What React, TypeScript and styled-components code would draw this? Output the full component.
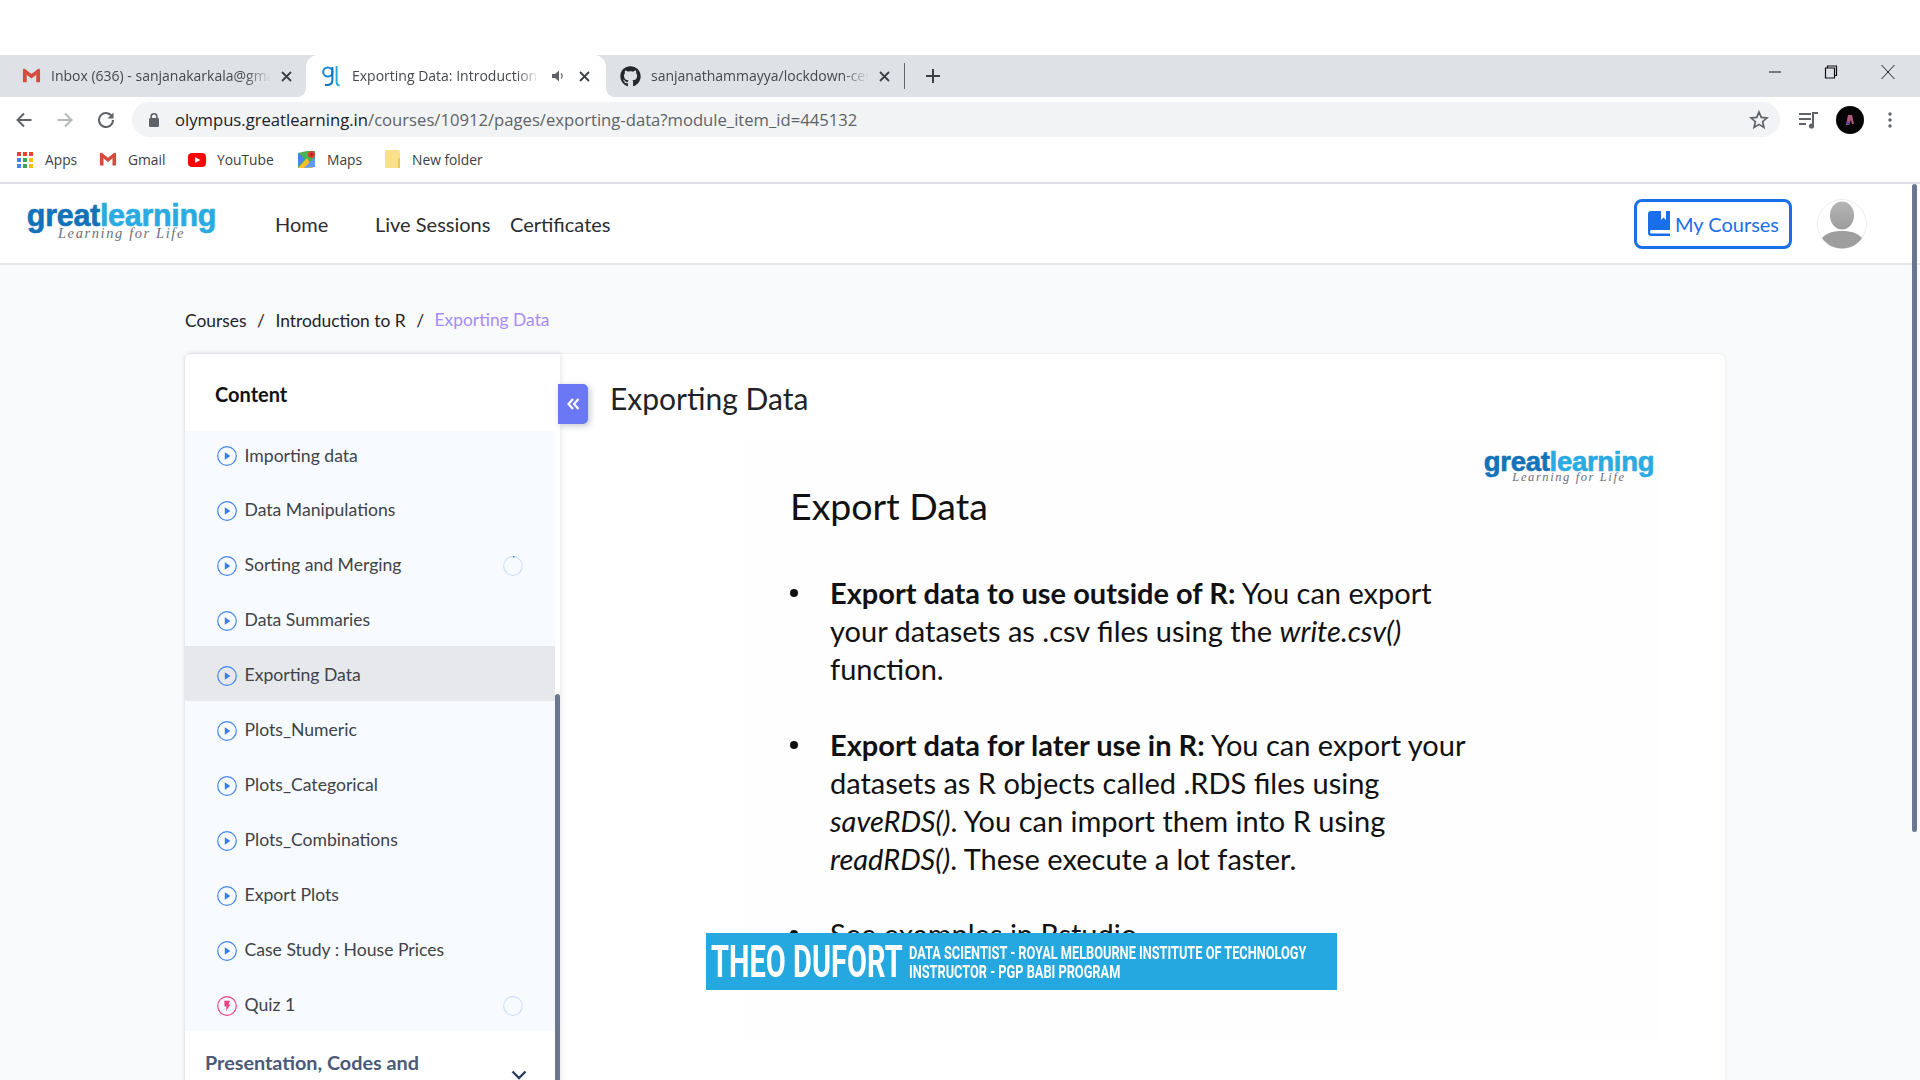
import React from "react";
import styled, { createGlobalStyle } from "styled-components";
import { FaGithub } from "react-icons/fa";

const GlobalStyle = createGlobalStyle`
  html, body {
    margin: 0;
    padding: 0;
    background: #fff;
    overflow: hidden;
  }
  * {
    box-sizing: border-box;
  }
`;

const lessons = [
  { title: "Importing data" },
  { title: "Data Manipulations" },
  { title: "Sorting and Merging", progress: "started" },
  { title: "Data Summaries" },
  { title: "Exporting Data", active: true },
  { title: "Plots_Numeric" },
  { title: "Plots_Categorical" },
  { title: "Plots_Combinations" },
  { title: "Export Plots" },
  { title: "Case Study : House Prices" },
  { title: "Quiz 1", quiz: true, progress: "empty" },
];

function PlayIcon() {
  return (
    <svg width="20" height="20" viewBox="0 0 20 20">
      <circle cx="10" cy="10" r="9.3" fill="none" stroke="#4285f4" strokeWidth="1.2" />
      <path d="M7.8 6.2 L13.4 10 L7.8 13.8 Z" fill="#3b7de8" />
    </svg>
  );
}

function QuizIcon() {
  return (
    <svg width="20" height="20" viewBox="0 0 20 20">
      <circle cx="10" cy="10" r="9.3" fill="none" stroke="#ec4480" strokeWidth="1.2" />
      <path d="M7.2 4.8 H13 L11.6 8.4 H13.4 L8.8 15.4 L9.6 10.4 H7.6 Z" fill="#ec4480" />
    </svg>
  );
}

function ProgressRing({ started }: { started?: boolean }) {
  return (
    <svg width="20" height="20" viewBox="0 0 20 20">
      <circle cx="10" cy="10" r="9.3" fill="none" stroke="#cfe0fb" strokeWidth="1.2" />
      {started && <path d="M10 0.7 A9.3 9.3 0 0 1 11.4 0.8" fill="none" stroke="#2f7be8" strokeWidth="1.6" />}
    </svg>
  );
}

function GmailIcon({ size = 18 }: { size?: number }) {
  return (
    <svg width={size} height={size * 0.8} viewBox="0 0 20 16">
      <path d="M1 3 V15 H5 V7 L10 11 L15 7 V15 H19 V3 L10 9.5 Z" fill="#e8eaed" />
      <path d="M1 15 V2.2 C1 1 2.4 0.5 3.3 1.2 L5 2.5 V15 Z" fill="#d54b3d" />
      <path d="M19 15 V2.2 C19 1 17.6 0.5 16.7 1.2 L15 2.5 V15 Z" fill="#d54b3d" />
      <path d="M3.3 1.2 L10 6.4 L16.7 1.2 L15.2 7 L10 11 L4.8 7 Z" fill="#d54b3d" />
    </svg>
  );
}

function GlFavicon() {
  return (
    <svg width="18" height="22" viewBox="0 0 18 22">
      <circle cx="5.8" cy="7" r="4.6" fill="none" stroke="#1f86c8" strokeWidth="2" />
      <path d="M10.4 2 V15 C10.4 18 8.5 20 5 20 H3" fill="none" stroke="#1273b8" strokeWidth="2" />
      <path d="M14.6 1 V17 C14.6 19 15.6 20.4 17.6 20.4" fill="none" stroke="#29abe2" strokeWidth="2" />
    </svg>
  );
}

function AppsIcon() {
  const colors = ["#ea4335", "#ea4335", "#ea4335", "#4285f4", "#34a853", "#fbbc04", "#4285f4", "#34a853", "#fbbc04"];
  return (
    <svg width="18" height="18" viewBox="0 0 18 18">
      {colors.map((c, i) => (
        <rect key={i} x={1 + (i % 3) * 6} y={1 + Math.floor(i / 3) * 6} width="4" height="4" fill={c} />
      ))}
    </svg>
  );
}

function YoutubeIcon() {
  return (
    <svg width="18" height="18" viewBox="0 0 18 18">
      <rect x="0" y="2" width="18" height="14" rx="4" fill="#f00" />
      <path d="M7 6 L12.4 9 L7 12 Z" fill="#fff" />
    </svg>
  );
}

function MapsIcon() {
  return (
    <svg width="19" height="19" viewBox="0 0 19 19">
      <path d="M1 3 L10 1 L18 1 V17 L1 18 Z" fill="#4caf50" />
      <path d="M1 18 L10 8 L16 18 Z" fill="#fbc02d" />
      <path d="M1 3 L8 9 L1 16 Z" fill="#4285f4" />
      <path d="M7 18 L18 7 V17 Z" fill="#5c9bf5" />
      <circle cx="14.5" cy="4.5" r="3.5" fill="#e53935" />
      <circle cx="14.5" cy="4.5" r="1.2" fill="#8e1c18" />
    </svg>
  );
}

function FolderIcon() {
  return (
    <svg width="16" height="19" viewBox="0 0 16 19">
      <rect x="0" y="0" width="15" height="18" rx="1.5" fill="#fbe08c" />
      <rect x="13" y="8" width="2" height="10" fill="#e9c75f" />
    </svg>
  );
}

function CloseGlyph() {
  return (
    <svg width="11" height="11" viewBox="0 0 11 11">
      <path d="M1 1 L10 10 M10 1 L1 10" stroke="#3c4043" strokeWidth="1.8" />
    </svg>
  );
}

function GreatLearningLogo({ small }: { small?: boolean }) {
  return (
    <LogoBox $small={small}>
      <LogoWord $small={small}>
        <LogoGreat>great</LogoGreat>
        <LogoLearning>learning</LogoLearning>
      </LogoWord>
      <LogoTag $small={small}>Learning for Life</LogoTag>
    </LogoBox>
  );
}

export default function App() {
  return (
    <>
      <GlobalStyle />
      <Screen>
        <TabStrip>
          <Tab $width={306}>
            <GmailIcon size={19} />
            <TabTitle $width={220}>Inbox (636) - sanjanakarkala@gmail.com</TabTitle>
            <CloseGlyph />
          </Tab>
          <ActiveTab $width={300}>
            <GlFavicon />
            <TabTitle $width={187}>Exporting Data: Introduction to R</TabTitle>
            <svg width="14" height="14" viewBox="0 0 14 14">
              <path d="M1 5 H4 L8 1.5 V12.5 L4 9 H1 Z" fill="#5f6368" />
              <path d="M10 4.5 C11.4 6 11.4 8 10 9.5" fill="none" stroke="#5f6368" strokeWidth="1.2" />
            </svg>
            <ActiveClose>
              <CloseGlyph />
            </ActiveClose>
          </ActiveTab>
          <Tab $width={298} $inset={14}>
            <FaGithub size={21} color="#24292e" />
            <TabTitle $width={218}>sanjanathammayya/lockdown-certificates</TabTitle>
            <CloseGlyph />
          </Tab>
          <TabDivider />
          <NewTab>
            <svg width="16" height="16" viewBox="0 0 16 16">
              <path d="M8 1 V15 M1 8 H15" stroke="#3c4043" strokeWidth="2" />
            </svg>
          </NewTab>
          <WindowControls>
            <svg width="14" height="14" viewBox="0 0 14 14">
              <path d="M1 7 H13" stroke="#111" strokeWidth="1" />
            </svg>
            <svg width="14" height="14" viewBox="0 0 14 14">
              <path d="M3.5 2.5 V1 H12.5 V10.5 H10.5 M1.5 3 H10.5 V13 H1.5 Z" fill="none" stroke="#111" strokeWidth="1.2" />
            </svg>
            <svg width="16" height="16" viewBox="0 0 16 16">
              <path d="M1.5 1 L14.5 15 M14.5 1 L1.5 15" stroke="#222" strokeWidth="1" />
            </svg>
          </WindowControls>
        </TabStrip>

        <NavBar>
          <NavButtons>
            <svg width="18" height="18" viewBox="0 0 18 18">
              <path d="M16.5 9 H2.5 M9 2.5 L2.5 9 L9 15.5" fill="none" stroke="#5f6368" strokeWidth="2" />
            </svg>
            <svg width="18" height="18" viewBox="0 0 18 18">
              <path d="M1.5 9 H15.5 M9 2.5 L15.5 9 L9 15.5" fill="none" stroke="#b4b7bb" strokeWidth="2" />
            </svg>
            <svg width="18" height="18" viewBox="0 0 18 18">
              <path d="M15.4 6.2 A7 7 0 1 0 16 9" fill="none" stroke="#5f6368" strokeWidth="2" />
              <path d="M16.5 1.5 V7.5 H10.5 Z" fill="#5f6368" />
            </svg>
          </NavButtons>
          <UrlPill>
            <svg width="12" height="16" viewBox="0 0 12 16">
              <rect x="1" y="6" width="10" height="9" rx="1.2" fill="#5f6368" />
              <path d="M3.2 6 V4.2 C3.2 1 8.8 1 8.8 4.2 V6" fill="none" stroke="#5f6368" strokeWidth="1.6" />
            </svg>
            <UrlText>
              <UrlHost>olympus.greatlearning.in</UrlHost>/courses/10912/pages/exporting-data?module_item_id=445132
            </UrlText>
            <svg width="20" height="20" viewBox="0 0 20 20">
              <path
                d="M10 2 L12.3 7.4 L18 7.9 L13.6 11.7 L15 17.5 L10 14.4 L5 17.5 L6.4 11.7 L2 7.9 L7.7 7.4 Z"
                fill="none"
                stroke="#5f6368"
                strokeWidth="1.7"
              />
            </svg>
          </UrlPill>
          <NavExtras>
            <svg width="20" height="18" viewBox="0 0 20 18">
              <path d="M0 3 H12 M0 8 H12 M0 13 H7" stroke="#5f6368" strokeWidth="2" />
              <path d="M14 15 V2 H19" fill="none" stroke="#5f6368" strokeWidth="2" />
              <circle cx="12.5" cy="15" r="2.6" fill="#5f6368" />
            </svg>
            <ProfileDot>
              <svg width="10" height="12" viewBox="0 0 10 12">
                <path d="M3 1 H7 L9 10 H7 L6 6 L4 11 H1 Z" fill="#b0597d" />
                <circle cx="3" cy="9" r="1.6" fill="#5a3fa0" />
              </svg>
            </ProfileDot>
            <MenuDots>
              <svg width="4" height="16" viewBox="0 0 4 16">
                <circle cx="2" cy="2" r="1.7" fill="#5f6368" />
                <circle cx="2" cy="8" r="1.7" fill="#5f6368" />
                <circle cx="2" cy="14" r="1.7" fill="#5f6368" />
              </svg>
            </MenuDots>
          </NavExtras>
        </NavBar>

        <BookmarkBar>
          <Bookmark $width={83}>
            <AppsIcon />
            Apps
          </Bookmark>
          <Bookmark $width={89}>
            <GmailIcon />
            Gmail
          </Bookmark>
          <Bookmark $width={109}>
            <YoutubeIcon />
            YouTube
          </Bookmark>
          <Bookmark $width={88}>
            <MapsIcon />
            Maps
          </Bookmark>
          <Bookmark $width={110}>
            <FolderIcon />
            New folder
          </Bookmark>
        </BookmarkBar>

        <SiteHeader>
          <GreatLearningLogo />
          <SiteNav>
            <SiteLink $width={100}>Home</SiteLink>
            <SiteLink $width={135}>Live Sessions</SiteLink>
            <SiteLink $width={100}>Certificates</SiteLink>
          </SiteNav>
          <HeaderRight>
            <CoursesButton>
              <svg width="22" height="25" viewBox="0 0 22 25">
                <path
                  d="M3 0 H13 V9 L15.5 6.5 L18 9 V0 H22 V19 H3.5 C1.5 19 1.5 22.5 3.5 22.5 H22 V25 H3 C1 25 0 23.8 0 22 V3 C0 1.2 1 0 3 0 Z"
                  fill="#1a6fe8"
                />
              </svg>
              My Courses
            </CoursesButton>
            <Avatar>
              <svg width="50" height="50" viewBox="0 0 50 50">
                <defs>
                  <linearGradient id="avatarFill" x1="0" y1="0" x2="0" y2="1">
                    <stop offset="0" stopColor="#b5b5b5" />
                    <stop offset="1" stopColor="#9c9c9c" />
                  </linearGradient>
                </defs>
                <circle cx="25" cy="25" r="24.5" fill="#fff" stroke="#ececec" />
                <ellipse cx="25" cy="16.5" rx="12" ry="14" fill="url(#avatarFill)" />
                <path d="M5 39 C10 33 18 32 25 32 C32 32 40 33 45 39 C40 46 33 49.5 25 49.5 C17 49.5 10 46 5 39 Z" fill="#9e9e9e" />
              </svg>
            </Avatar>
          </HeaderRight>
        </SiteHeader>

        <PageBody>
          <Breadcrumb>
            <Crumb>Courses</Crumb>
            <CrumbSep>/</CrumbSep>
            <Crumb>Introduction to R</Crumb>
            <CrumbSep>/</CrumbSep>
            <CurrentCrumb>Exporting Data</CurrentCrumb>
          </Breadcrumb>

          <Card>
            <Sidebar>
              <SidebarTitle>Content</SidebarTitle>
              <LessonList>
                {lessons.map((lesson) => (
                  <LessonRow key={lesson.title} $active={lesson.active}>
                    {lesson.quiz ? <QuizIcon /> : <PlayIcon />}
                    <LessonTitle>{lesson.title}</LessonTitle>
                    {lesson.progress && <ProgressRing started={lesson.progress === "started"} />}
                  </LessonRow>
                ))}
              </LessonList>
              <SectionRow>
                <SectionTitle>Presentation, Codes and Datasets</SectionTitle>
                <svg width="16" height="10" viewBox="0 0 16 10">
                  <path d="M1.5 1.5 L8 8 L14.5 1.5" fill="none" stroke="#2d3f5e" strokeWidth="2.4" />
                </svg>
              </SectionRow>
              <SidebarThumb />
              <CollapseButton>
                <svg width="13" height="12" viewBox="0 0 13 12">
                  <path d="M6 1 L1.5 6 L6 11 M11.5 1 L7 6 L11.5 11" fill="none" stroke="#fff" strokeWidth="2.2" />
                </svg>
              </CollapseButton>
            </Sidebar>

            <Main>
              <PageTitle>Exporting Data</PageTitle>
              <Slide>
                <SlideLogo>
                  <GreatLearningLogo small />
                </SlideLogo>
                <SlideHeading>Export Data</SlideHeading>
                <SlideBullets>
                  <SlideBullet>
                    <BulletDot />
                    <span>
                      <b>Export data to use outside of R:</b> You can export your datasets as .csv files using the{" "}
                      <i>write.csv()</i> function.
                    </span>
                  </SlideBullet>
                  <SlideBullet>
                    <BulletDot />
                    <span>
                      <b>Export data for later use in R:</b> You can export your datasets as R objects called .RDS
                      files using <i>saveRDS()</i>. You can import them into R using <i>readRDS()</i>. These execute a
                      lot faster.
                    </span>
                  </SlideBullet>
                  <SlideBullet>
                    <BulletDot />
                    <span>See examples in Rstudio</span>
                  </SlideBullet>
                </SlideBullets>
                <LowerThird>
                  <LowerName>THEO DUFORT</LowerName>
                  <LowerRole>
                    <span>DATA SCIENTIST - ROYAL MELBOURNE INSTITUTE OF TECHNOLOGY</span>
                    <span>INSTRUCTOR - PGP BABI PROGRAM</span>
                  </LowerRole>
                </LowerThird>
              </Slide>
            </Main>
          </Card>
        </PageBody>
        <PageThumb />
      </Screen>
    </>
  );
}

const Screen = styled.div`
  position: relative;
  width: 1920px;
  height: 1080px;
  padding-top: 55px;
  overflow: hidden;
  background: #fff;
  font-family: "Lato", "Liberation Sans", sans-serif;
`;

const TabStrip = styled.div`
  display: flex;
  align-items: center;
  height: 42px;
  background: #dee1e6;
`;

const Tab = styled.div<{ $width: number; $inset?: number }>`
  display: flex;
  align-items: center;
  width: ${({ $width }) => $width}px;
  height: 100%;
  padding-left: ${({ $inset }) => $inset ?? 22}px;
  gap: 10px;
`;

const ActiveTab = styled(Tab)`
  position: relative;
  padding-left: 16px;
  gap: 12px;
  background: #fff;
  border-radius: 12px 12px 0 0;

  &::before,
  &::after {
    content: "";
    position: absolute;
    bottom: 0;
    width: 10px;
    height: 10px;
  }
  &::before {
    left: -10px;
    background: radial-gradient(circle at 0 0, #dee1e6 10px, #fff 10.5px);
  }
  &::after {
    right: -10px;
    background: radial-gradient(circle at 100% 0, #dee1e6 10px, #fff 10.5px);
  }
`;

const ActiveClose = styled.span`
  display: flex;
  margin-left: 2px;
`;

const TabTitle = styled.div<{ $width: number }>`
  width: ${({ $width }) => $width}px;
  margin-top: -2px;
  overflow: hidden;
  white-space: nowrap;
  font-family: "Open Sans", sans-serif;
  font-size: 14px;
  color: #45484c;
  -webkit-mask-image: linear-gradient(to right, #000 88%, transparent);
  mask-image: linear-gradient(to right, #000 88%, transparent);
`;

const TabDivider = styled.div`
  width: 1px;
  height: 26px;
  background: #5f6368;
`;

const NewTab = styled.div`
  display: flex;
  align-items: center;
  margin-left: 20px;
`;

const WindowControls = styled.div`
  display: flex;
  align-items: center;
  gap: 42px;
  margin-left: auto;
  margin-top: -8px;
  padding-right: 24px;
`;

const NavBar = styled.div`
  display: flex;
  align-items: center;
  height: 45px;
`;

const NavButtons = styled.div`
  display: flex;
  align-items: center;
  gap: 23px;
  width: 132px;
  padding-left: 15px;
`;

const UrlPill = styled.div`
  display: flex;
  align-items: center;
  width: 1648px;
  height: 35px;
  padding: 0 11px 0 16px;
  background: #f1f3f4;
  border-radius: 18px;
`;

const UrlText = styled.div`
  flex: 1;
  margin: -1px 0 0 15px;
  font-family: "Open Sans", sans-serif;
  font-size: 16.65px;
  color: #5f6368;
  white-space: nowrap;
`;

const UrlHost = styled.span`
  color: #202124;
`;

const NavExtras = styled.div`
  display: flex;
  align-items: center;
  gap: 17px;
  padding-left: 19px;
`;

const MenuDots = styled.span`
  display: flex;
  margin-left: 7px;
`;

const ProfileDot = styled.div`
  display: flex;
  align-items: center;
  justify-content: center;
  width: 28px;
  height: 28px;
  border-radius: 50%;
  background: #050505;
`;

const BookmarkBar = styled.div`
  display: flex;
  align-items: center;
  height: 42px;
  padding: 0 0 5px 16px;
  border-bottom: 2px solid #dfdfe8;
`;

const Bookmark = styled.div<{ $width: number }>`
  display: flex;
  align-items: center;
  gap: 11px;
  width: ${({ $width }) => $width}px;
  font-family: "Open Sans", sans-serif;
  font-size: 13.8px;
  color: #3c4043;
`;

const SiteHeader = styled.header`
  display: flex;
  align-items: center;
  height: 81px;
  padding: 0 53px 0 27px;
  background: #fff;
  border-bottom: 2px solid #e5e6ea;
`;

const LogoBox = styled.div<{ $small?: boolean }>`
  display: flex;
  flex-direction: column;
  align-items: center;
  width: ${({ $small }) => ($small ? 170 : 189)}px;
  margin-top: ${({ $small }) => ($small ? 0 : -7)}px;
`;

const LogoWord = styled.div<{ $small?: boolean }>`
  font-family: "Liberation Sans", sans-serif;
  font-weight: 700;
  font-size: ${({ $small }) => ($small ? 27.5 : 30.5)}px;
  line-height: ${({ $small }) => ($small ? 24 : 28)}px;
  letter-spacing: -0.3px;
  white-space: nowrap;
  -webkit-text-stroke: 0.6px currentColor;
`;

const LogoGreat = styled.span`
  color: #1273b8;
`;

const LogoLearning = styled.span`
  color: #29abe2;
`;

const LogoTag = styled.div<{ $small?: boolean }>`
  margin-top: -3px;
  font-family: "Liberation Serif", serif;
  font-style: italic;
  font-size: ${({ $small }) => ($small ? 12.5 : 14.5)}px;
  line-height: ${({ $small }) => ($small ? 12 : 14)}px;
  letter-spacing: 1.6px;
  color: #6c7075;
`;

const SiteNav = styled.nav`
  display: flex;
  align-items: center;
  margin-left: 59px;
`;

const SiteLink = styled.a<{ $width: number }>`
  width: ${({ $width }) => $width}px;
  font-size: 20px;
  color: #2b2d30;
  white-space: nowrap;
`;

const HeaderRight = styled.div`
  display: flex;
  align-items: center;
  gap: 25px;
  margin-left: auto;
`;

const CoursesButton = styled.div`
  display: flex;
  align-items: center;
  gap: 5px;
  width: 158px;
  height: 50px;
  padding-left: 11px;
  border: 3px solid #1a6fe8;
  border-radius: 8px;
  font-size: 20px;
  color: #1a6fe8;
  white-space: nowrap;
`;

const Avatar = styled.div`
  width: 50px;
  height: 50px;
`;

const PageBody = styled.main`
  height: 816px;
  padding: 43px 195px 0 185px;
  background: #f9fafb;
`;

const Breadcrumb = styled.div`
  display: flex;
  align-items: center;
  height: 24px;
  margin-bottom: 22px;
  font-size: 17.4px;
`;

const Crumb = styled.span`
  color: #1f2328;
`;

const CrumbSep = styled.span`
  margin: 0 10.5px;
  color: #1f2328;
`;

const CurrentCrumb = styled.span`
  margin-top: -2px;
  color: #a78bfa;
`;

const Card = styled.section`
  display: flex;
  min-height: 760px;
  background: #fff;
  border-radius: 6px 6px 0 0;
  box-shadow: 0 0 3px rgba(30, 40, 70, 0.12);
`;

const Sidebar = styled.aside`
  position: relative;
  flex: none;
  width: 375px;
  padding-right: 5px;
  box-shadow: 1px 0 5px rgba(30, 40, 70, 0.12);
`;

const SidebarTitle = styled.div`
  display: flex;
  align-items: center;
  height: 77px;
  padding: 2px 0 0 30px;
  font-size: 20px;
  font-weight: 700;
  color: #111;
`;

const LessonList = styled.div`
  background: #f7faff;
`;

const LessonRow = styled.div<{ $active?: boolean }>`
  display: flex;
  align-items: center;
  height: 55px;
  padding: 4px 32px 0 32px;
  background: ${({ $active }) => ($active ? "#e6e8ec" : "transparent")};

  &:first-child {
    height: 50px;
    padding-top: 0;
  }
`;

const LessonTitle = styled.div`
  flex: 1;
  margin: -2px 0 0 7.5px;
  font-size: 17.6px;
  color: #3f4347;
`;

const SectionRow = styled.div`
  display: flex;
  align-items: center;
  justify-content: space-between;
  padding: 18px 28px 0 20px;
`;

const SectionTitle = styled.div`
  width: 260px;
  font-size: 19.8px;
  font-weight: 700;
  line-height: 26px;
  color: #4a5a78;
`;

const SidebarThumb = styled.div`
  position: absolute;
  top: 340px;
  right: 0;
  width: 5px;
  height: 420px;
  background: #6b7690;
  border-radius: 3px 3px 0 0;
`;

const CollapseButton = styled.div`
  position: absolute;
  top: 30px;
  left: 373px;
  display: flex;
  align-items: center;
  justify-content: center;
  width: 30px;
  height: 40px;
  background: #6b78f5;
  border-radius: 0 5px 5px 0;
  box-shadow: 2px 2px 6px rgba(30, 40, 70, 0.25);
`;

const Main = styled.div`
  flex: 1;
  padding: 22px 50px 0 50px;
`;

const PageTitle = styled.h1`
  margin: 0;
  font-size: 30px;
  font-weight: 400;
  line-height: 44px;
  color: #1f2328;
`;

const Slide = styled.div`
  position: relative;
  width: 915px;
  height: 598px;
  margin: 20px 0 0 135px;
  padding: 10px 6px 0 45px;
  background: #fefefe;
`;

const SlideLogo = styled.div`
  display: flex;
  justify-content: flex-end;
  margin-bottom: -1px;
`;

const SlideHeading = styled.h2`
  margin: 0;
  font-family: "Lato", sans-serif;
  font-size: 37.5px;
  font-weight: 400;
  line-height: 48px;
  color: #111;
`;

const SlideBullets = styled.ul`
  width: 690px;
  margin: 43.5px 0 0;
  padding: 0;
  list-style: none;
  font-family: "Lato", sans-serif;
  font-size: 29px;
  line-height: 38px;
  color: #111;
`;

const SlideBullet = styled.li`
  display: flex;
  align-items: flex-start;
  gap: 32px;
  margin-bottom: 38px;

  &:nth-child(2) {
    margin-bottom: 37px;
  }
`;

const BulletDot = styled.span`
  flex: none;
  width: 8px;
  height: 8px;
  margin-top: 15px;
  border-radius: 50%;
  background: #111;
`;

const LowerThird = styled.div`
  position: absolute;
  top: 493px;
  left: -39px;
  display: flex;
  align-items: center;
  width: 631px;
  height: 57px;
  padding-left: 5px;
  background: #25a7e0;
  color: #fff;
  font-family: "Roboto", sans-serif;
  font-weight: 700;
`;

const LowerName = styled.div`
  flex: none;
  width: 198px;
  font-size: 45px;
  white-space: nowrap;
  transform: scaleX(0.645);
  transform-origin: left center;
`;

const LowerRole = styled.div`
  display: flex;
  flex-direction: column;
  margin-top: 2px;
  font-size: 18.5px;
  line-height: 19px;
  white-space: nowrap;
  transform: scaleX(0.69);
  transform-origin: left center;
`;

const PageThumb = styled.div`
  position: absolute;
  top: 184px;
  right: 3px;
  width: 5px;
  height: 648px;
  background: #6b7690;
  border-radius: 3px;
`;
